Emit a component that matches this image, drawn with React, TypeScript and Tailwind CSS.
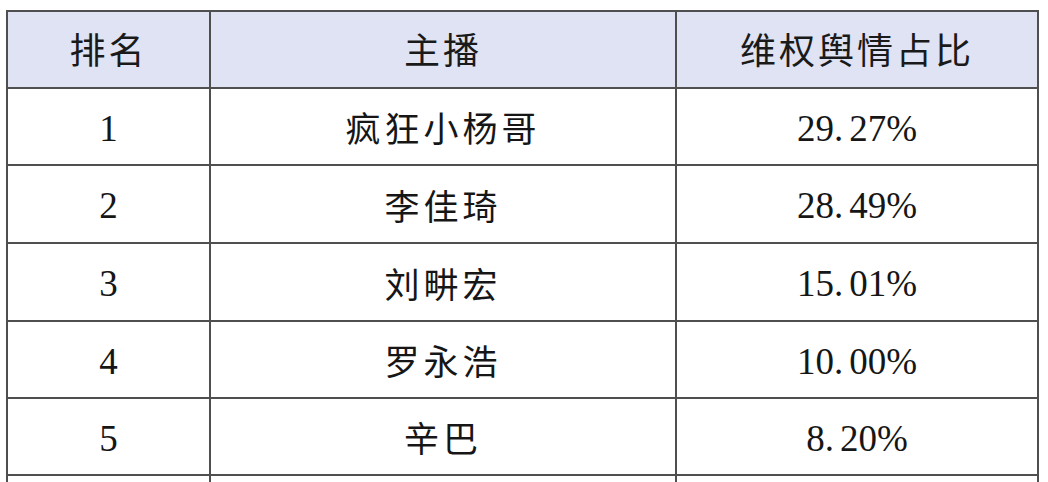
import React from "react";

type Row = { rank: string; name: string; share: string; h: string };

const rows: Row[] = [
  { rank: "1", name: "疯狂小杨哥", share: "29.27%", h: "h-[77px]" },
  { rank: "2", name: "李佳琦", share: "28.49%", h: "h-[78px]" },
  { rank: "3", name: "刘畊宏", share: "15.01%", h: "h-[78px]" },
  { rank: "4", name: "罗永浩", share: "10.00%", h: "h-[77px]" },
  { rank: "5", name: "辛巴", share: "8.20%", h: "h-[77px]" },
  { rank: "", name: "", share: "", h: "h-[77px]" },
];

const cell = "flex items-center justify-center border-r-2 border-b-2 border-[#4f4f4f]";
const cjk = "font-['Noto_Sans_CJK_SC','Noto_Sans',sans-serif]";
const serif = "font-['Liberation_Serif','Noto_Sans_CJK_SC',serif]";
const head = `${cjk} text-[36px] tracking-[3px] text-[#1a1a1a] pb-[4px]`;

function Share({ value }: { value: string }) {
  // the source font leaves a wide gap after the decimal point
  const [a, b] = value.split(".");
  if (!b) return null;
  return (
    <span className={`${serif} text-[37px] text-[#161616] pt-[4px]`}>
      {a}.<span className="ml-[6px]">{b}</span>
    </span>
  );
}

export default function App() {
  return (
    <div className="h-[482px] w-[1048px] overflow-hidden bg-white pl-[6px] pt-[10px]">
      <div className="grid w-[1033px] grid-cols-[203px_466px_362px] border-l-2 border-t-2 border-[#4f4f4f]">
        <div className={`${cell} h-[77px] bg-[#dfe3f3]`}>
          <span className={head}>排名</span>
        </div>
        <div className={`${cell} h-[77px] bg-[#dfe3f3]`}>
          <span className={head}>主播</span>
        </div>
        <div className={`${cell} h-[77px] bg-[#dfe3f3]`}>
          <span className={head}>维权舆情占比</span>
        </div>
        {rows.map((r, i) => (
          <React.Fragment key={i}>
            <div className={`${cell} ${r.h}`}>
              <span className={`${serif} text-[37px] text-[#161616] pt-[4px]`}>{r.rank}</span>
            </div>
            <div className={`${cell} ${r.h}`}>
              <span className={`${cjk} text-[35px] tracking-[4px] text-[#161616] pt-[2px]`}>{r.name}</span>
            </div>
            <div className={`${cell} ${r.h}`}>
              <Share value={r.share} />
            </div>
          </React.Fragment>
        ))}
      </div>
    </div>
  );
}
